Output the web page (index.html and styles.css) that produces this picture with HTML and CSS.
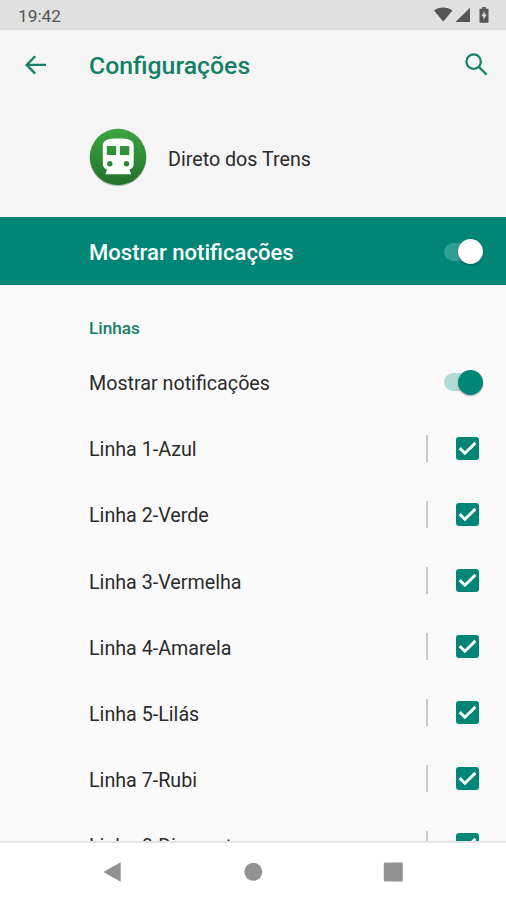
FILE: index.html
```html
<!DOCTYPE html>
<html lang="pt-BR">
<head>
  <meta charset="UTF-8" />
  <meta name="viewport" content="width=device-width, initial-scale=1.0"/>
  <title>Configurações</title>
  <link rel="stylesheet" href="styles.css">
</head>
<body>
  <div class="status-bar">
    <span class="clock">19:42</span>
    <svg class="status-icons" width="56" height="18" viewBox="0 0 56 18">
      <path d="M0 4.500C5 .5 13 .5 18.500 4.500L9.250 15.500z"/>
      <path d="M36 1.700V16H21.500z"/>
      <path fill-rule="evenodd" d="M48.200 1h3.600v1.700h2.700v14h-9V2.700h2.700zM50.600 5.100l-3.200 5.100h2v3.700l3.400-5.300h-2.200z"/>
    </svg>
  </div>

  <header class="app-bar">
    <svg class="back" width="22" height="20" viewBox="0 0 22 20">
      <path d="M10.200 1.200L1.600 9.900l8.600 8.700M1.900 9.900H21"/>
    </svg>
    <h1>Configurações</h1>
    <svg class="search" width="23" height="23" viewBox="0 0 24 24">
      <circle cx="9" cy="9" r="7.500"/>
      <path d="M14.200 14.200L22.600 22.600"/>
    </svg>
  </header>

  <section class="app-info">
    <svg class="app-icon" width="60" height="62" viewBox="0 0 60 62">
      <defs>
        <linearGradient id="green" x1="0" y1="0" x2="0" y2="1">
          <stop offset="0" stop-color="#3ca541"/>
          <stop offset="1" stop-color="#23722b"/>
        </linearGradient>
      </defs>
      <circle class="icon-shadow" cx="30" cy="30.800" r="28.500"/>
      <circle cx="30" cy="30" r="28.200" fill="url(#green)"/>
      <!-- train front -->
      <path fill="#fff" fill-rule="evenodd" d="M14.800 19C14.800 13 19.500 11.500 30.200 11.500s15.500 1.500 15.500 7.500V36c0 4-1.800 6-4.200 6.300l1.500 5H17.500l1.500-5c-2.400-.3-4.200-2.300-4.200-6.300zM18.800 18.900v9.200h9.400v-9.200zM31.900 18.900v9.200h9.400v-9.200zM21.800 34a2.700 2.700 0 1 0 0 5.400a2.700 2.700 0 0 0 0-5.400zM38.500 34a2.700 2.700 0 1 0 0 5.400a2.700 2.700 0 0 0 0-5.400z"/>
    </svg>
    <span>Direto dos Trens</span>
  </section>

  <section class="master">
    <span>Mostrar notificações</span>
    <span class="switch"></span>
  </section>

  <main class="list">
    <h2>Linhas</h2>
    <div class="row">
      <span class="label">Mostrar notificações</span>
      <span class="switch"></span>
    </div>
    <div class="row">
      <span class="label">Linha 1-Azul</span>
      <span class="divider"></span>
      <svg class="check" viewBox="0 0 23 23"><path d="M3.700 11.100l5.200 5.100L19.400 5.900"/></svg>
    </div>
    <div class="row">
      <span class="label">Linha 2-Verde</span>
      <span class="divider"></span>
      <svg class="check" viewBox="0 0 23 23"><path d="M3.700 11.100l5.200 5.100L19.400 5.900"/></svg>
    </div>
    <div class="row">
      <span class="label">Linha 3-Vermelha</span>
      <span class="divider"></span>
      <svg class="check" viewBox="0 0 23 23"><path d="M3.700 11.100l5.200 5.100L19.400 5.900"/></svg>
    </div>
    <div class="row">
      <span class="label">Linha 4-Amarela</span>
      <span class="divider"></span>
      <svg class="check" viewBox="0 0 23 23"><path d="M3.700 11.100l5.200 5.100L19.400 5.900"/></svg>
    </div>
    <div class="row">
      <span class="label">Linha 5-Lilás</span>
      <span class="divider"></span>
      <svg class="check" viewBox="0 0 23 23"><path d="M3.700 11.100l5.200 5.100L19.400 5.900"/></svg>
    </div>
    <div class="row">
      <span class="label">Linha 7-Rubi</span>
      <span class="divider"></span>
      <svg class="check" viewBox="0 0 23 23"><path d="M3.700 11.100l5.200 5.100L19.400 5.900"/></svg>
    </div>
    <div class="row">
      <span class="label">Linha 8-Diamante</span>
      <span class="divider"></span>
      <svg class="check" viewBox="0 0 23 23"><path d="M3.700 11.100l5.200 5.100L19.400 5.900"/></svg>
    </div>
  </main>

  <nav class="nav-bar">
    <svg width="20" height="20" viewBox="0 0 20 20"><path d="M.4 10L17.700.3v19.400z"/></svg>
    <svg width="20" height="20" viewBox="0 0 20 20"><circle cx="10.300" cy="9.800" r="9"/></svg>
    <svg width="20" height="20" viewBox="0 0 20 20"><rect x=".8" y=".6" width="19" height="18.800" rx="1"/></svg>
  </nav>
</body>
</html>
```
FILE: styles.css
```css
* {
  box-sizing: border-box;
}
body {
  margin: 0;
  height: 900px;
  overflow: hidden;
  display: flex;
  flex-direction: column;
  background: #fafafa;
  color: #2b2b2b;
  font-family: Roboto, "Liberation Sans", sans-serif;
  font-size: 19.7px;
}
h1, h2 {
  margin: 0;
  font-weight: 500;
  color: #148068;
}
svg {
  display: block;
  flex: none;
}
/* Status bar */
.status-bar {
  flex: none;
  height: 30px;
  padding: 1px 16px 0 18px;
  display: flex;
  align-items: center;
  justify-content: space-between;
  background: #e0e0e0;
  color: #555;
}
.clock {
  font-size: 17.3px;
}
.status-icons {
  margin-bottom: 1px;
  fill: #555;
}
/* Title bar */
.app-bar {
  flex: none;
  height: 70px;
  padding: 0 18px 0 25px;
  display: flex;
  align-items: center;
  background: #f5f5f5;
}
.app-bar h1 {
  flex: 1;
  margin-left: 42px;
  font-size: 24.8px;
}
.back, .search {
  fill: none;
  stroke: #148068;
  stroke-width: 2.3;
}
.search {
  margin-bottom: 2px;
}
/* App name and icon */
.app-info {
  flex: none;
  height: 117px;
  padding: 1px 0 0 88px;
  display: flex;
  align-items: center;
  gap: 20px;
  background: #f5f5f5;
}
.app-icon {
  margin-bottom: 2px;
}
.icon-shadow {
  fill: #000;
  opacity: 0.2;
}
/* Main toggle */
.master {
  flex: none;
  height: 68.4px;
  padding: 2px 23px 0 89px;
  display: flex;
  align-items: center;
  justify-content: space-between;
  background: #008577;
  color: #fff;
  font-size: 22.1px;
  font-weight: 500;
}
.switch {
  width: 39px;
  height: 25px;
  display: flex;
  align-items: center;
}
.master .switch {
  margin-bottom: 1px;
}
.switch::before {
  content: "";
  width: 30px;
  height: 18px;
  margin-right: -16px;
  border-radius: 9px;
  background: #b3dad5;
}
.switch::after {
  content: "";
  width: 25px;
  height: 25px;
  border-radius: 50%;
  background: #008577;
  box-shadow: 0 1px 2px rgba(0, 0, 0, 0.35);
}
.master .switch::before {
  background: #329d92;
}
.master .switch::after {
  background: #fff;
}
/* Channel list */
.list {
  flex: 1;
  min-height: 0;
  overflow: hidden;
  padding: 30.6px 23px 0 89px;
}
.list h2 {
  height: 33.7px;
  font-size: 17.2px;
  line-height: 24px;
}
.row {
  height: 66.1px;
  display: flex;
  align-items: center;
}
.label {
  flex: 1;
  padding-top: 2px;
}
.divider {
  width: 2px;
  height: 27px;
  margin-right: 28px;
  background: #c9c9c9;
}
.check {
  width: 23px;
  height: 23px;
  margin-right: 4px;
  border-radius: 3px;
  background: #008577;
  fill: none;
  stroke: #fff;
  stroke-width: 2.9;
}
.row > .divider, .row > .check, .row > .switch {
  margin-bottom: 1px;
}
/* Navigation buttons */
.nav-bar {
  flex: none;
  height: 59px;
  display: flex;
  align-items: center;
  justify-content: center;
  gap: 120px;
  border-top: 2px solid #e4e4e4;
  background: #fff;
  fill: #929292;
}
```
